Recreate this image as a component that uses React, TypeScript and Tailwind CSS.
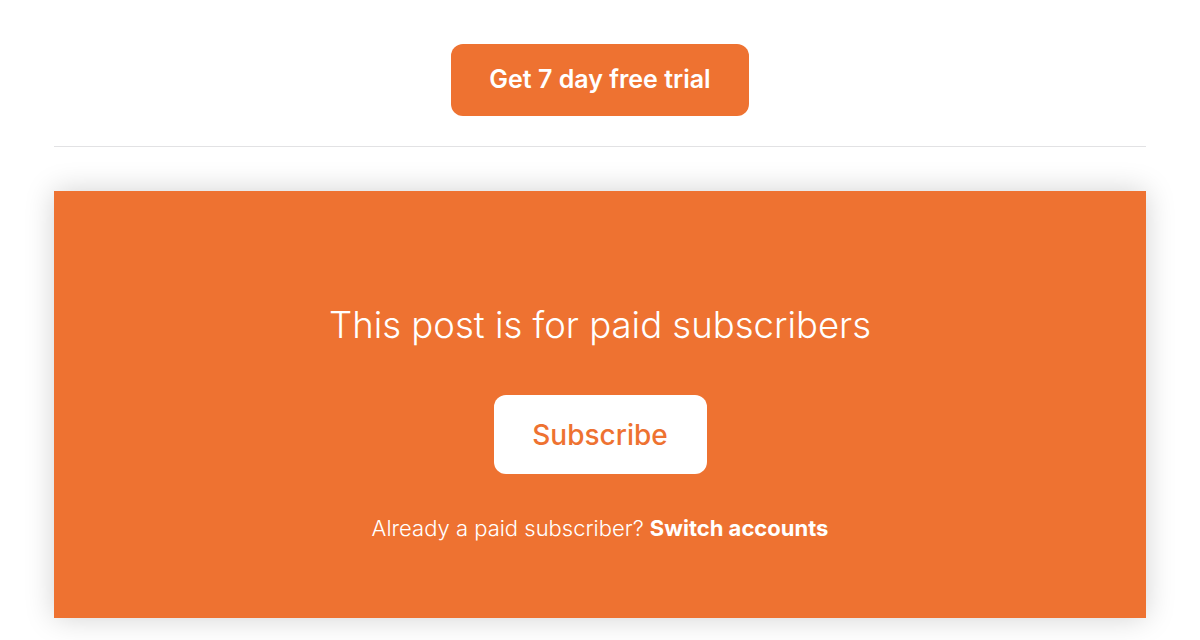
export default function App() {
  return (
    <div className="w-[1200px] h-[640px] bg-white overflow-hidden" style={{ fontFamily: "Inter, 'Noto Sans', sans-serif" }}>
      <div className="flex flex-col items-center pt-[44px]">
        <button className="w-[298px] h-[72px] rounded-[12px] bg-[#EE7231] text-white text-[25px] font-semibold flex items-center justify-center">
          Get 7 day free trial
        </button>
      </div>
      <div className="mx-[54px] mt-[30px] h-px bg-[#e2e2e4]" />
      <div className="mx-[54px] mt-[44px] h-[427px] bg-[#EE7231] shadow-[0_0_28px_rgba(0,0,0,0.18)] flex flex-col items-center pt-[112px]">
        <h2 className="text-white text-[36.5px] font-light leading-[44px]">This post is for paid subscribers</h2>
        <button className="mt-[48px] w-[213px] h-[79px] rounded-[12px] bg-white text-[#EE7231] text-[28px] font-medium flex items-center justify-center">
          Subscribe
        </button>
        <p className="mt-[38px] text-white text-[22px] leading-[33px] font-light">
          Already a paid subscriber? <span className="font-bold">Switch accounts</span>
        </p>
      </div>
    </div>
  );
}
